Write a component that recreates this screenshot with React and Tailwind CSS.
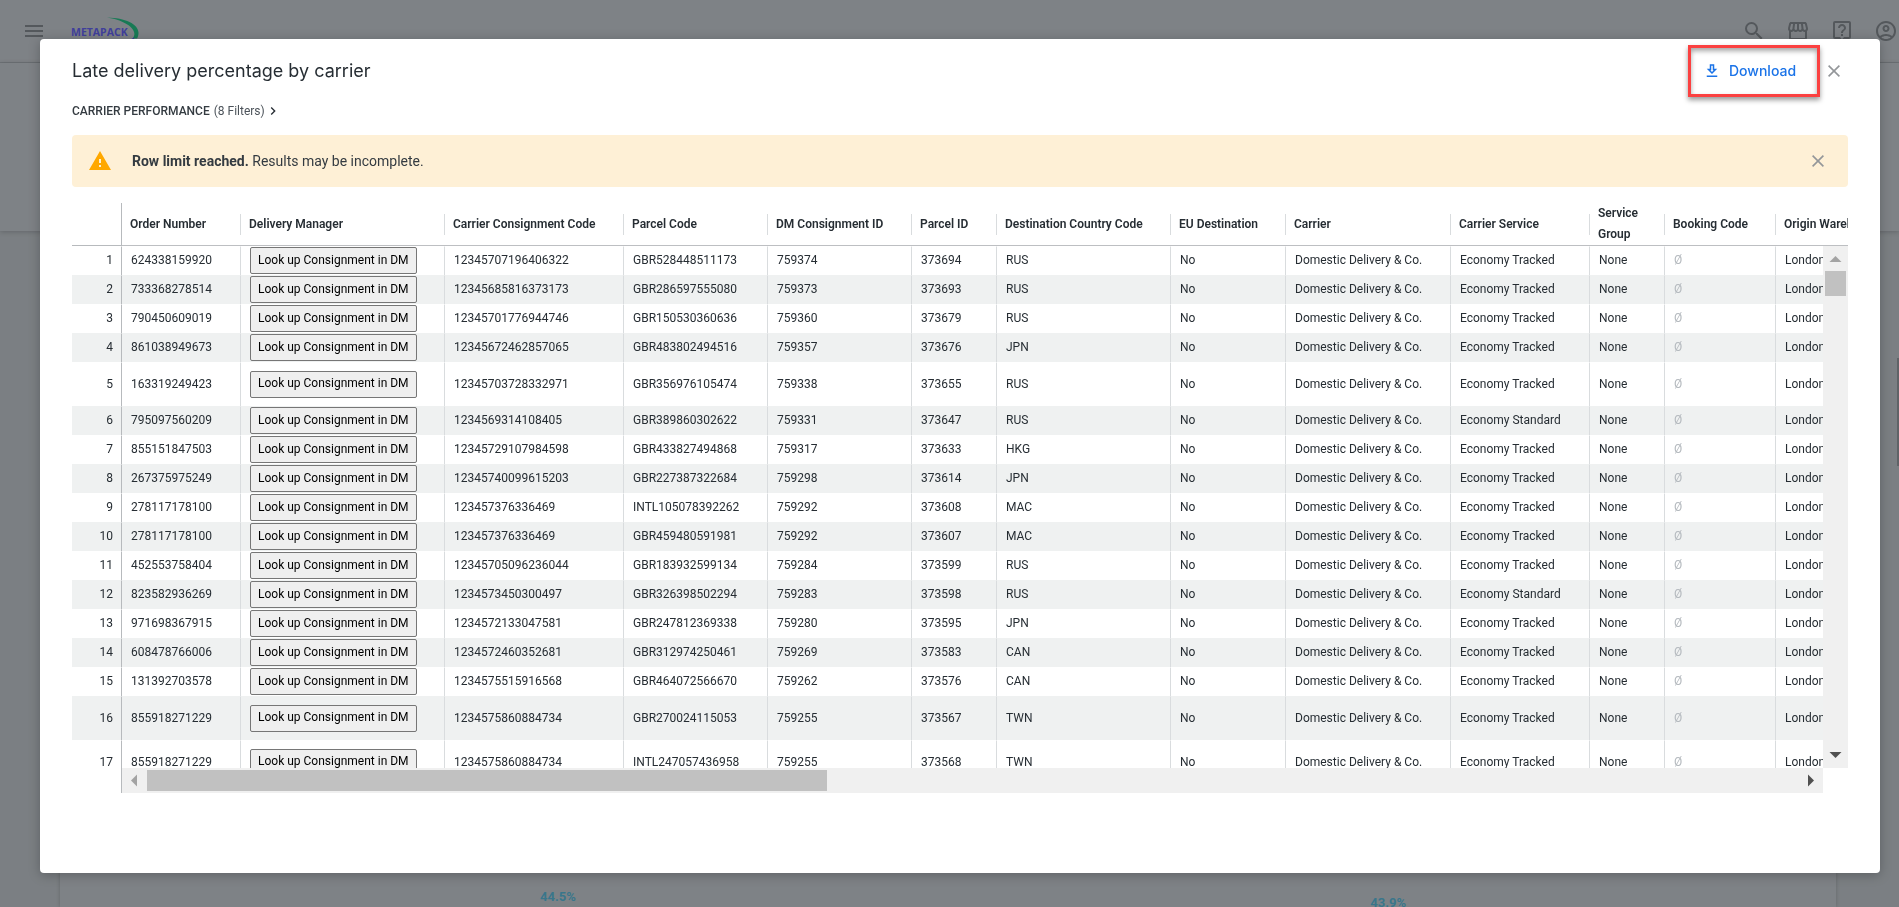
import { MdMenu, MdSearch, MdOutlineStorefront, MdOutlineLiveHelp, MdOutlineAccountCircle, MdWarning, MdChevronRight } from "react-icons/md";

const columns = [
  { label: "Order Number", width: "w-[119px]" },
  { label: "Delivery Manager", width: "w-[204px]" },
  { label: "Carrier Consignment Code", width: "w-[179px]" },
  { label: "Parcel Code", width: "w-36" },
  { label: "DM Consignment ID", width: "w-36" },
  { label: "Parcel ID", width: "w-[85px]" },
  { label: "Destination Country Code", width: "w-[174px]" },
  { label: "EU Destination", width: "w-[115px]" },
  { label: "Carrier", width: "w-[165px]" },
  { label: "Carrier Service", width: "w-[139px]" },
  { label: "Service Group", width: "w-[75px]" },
  { label: "Booking Code", width: "w-[111px]" },
  { label: "Origin Warehouse", width: "w-[140px]" },
];

const T = "Economy Tracked";
const S = "Economy Standard";

const rows = [
  ["624338159920", "12345707196406322", "GBR528448511173", "759374", "373694", "RUS", T],
  ["733368278514", "12345685816373173", "GBR286597555080", "759373", "373693", "RUS", T],
  ["790450609019", "12345701776944746", "GBR150530360636", "759360", "373679", "RUS", T],
  ["861038949673", "12345672462857065", "GBR483802494516", "759357", "373676", "JPN", T],
  ["163319249423", "12345703728332971", "GBR356976105474", "759338", "373655", "RUS", T, true],
  ["795097560209", "1234569314108405", "GBR389860302622", "759331", "373647", "RUS", S],
  ["855151847503", "12345729107984598", "GBR433827494868", "759317", "373633", "HKG", T],
  ["267375975249", "12345740099615203", "GBR227387322684", "759298", "373614", "JPN", T],
  ["278117178100", "123457376336469", "INTL105078392262", "759292", "373608", "MAC", T],
  ["278117178100", "123457376336469", "GBR459480591981", "759292", "373607", "MAC", T],
  ["452553758404", "12345705096236044", "GBR183932599134", "759284", "373599", "RUS", T],
  ["823582936269", "1234573450300497", "GBR326398502294", "759283", "373598", "RUS", S],
  ["971698367915", "1234572133047581", "GBR247812369338", "759280", "373595", "JPN", T],
  ["608478766006", "1234572460352681", "GBR312974250461", "759269", "373583", "CAN", T],
  ["131392703578", "1234575515916568", "GBR464072566670", "759262", "373576", "CAN", T],
  ["855918271229", "1234575860884734", "GBR270024115053", "759255", "373567", "TWN", T, true],
  ["855918271229", "1234575860884734", "INTL247057436958", "759255", "373568", "TWN", T, true],
];

function CloseIcon() {
  return (
    <svg viewBox="0 0 12 12" className="size-3" fill="none" stroke="currentColor" strokeWidth="1.6" aria-hidden="true">
      <path d="M.6.6l10.8 10.8M11.4.6L.6 11.4" />
    </svg>
  );
}

function Background() {
  return (
    <div className="flex min-h-screen flex-col bg-[#7b7f83] text-[#54585c]">
      <header className="flex h-[63px] shrink-0 items-center border-b border-[#6e7276] bg-[#7e8286] pr-px pl-[22px]">
        <button type="button" aria-label="Menu"><MdMenu className="size-6" /></button>
        <svg viewBox="0 0 76 32" className="mt-1 ml-[18px] h-8 w-[76px]" role="img" aria-label="Metapack">
          <path d="M43 .5c18 .4 31.500 6.500 31.500 15.300c0 2.200-.5 4-1.500 5.700l-4.200 0c1.200-1.800 1.800-3.300 1.500-5.400C69.500 9 57 2.600 43 .5z" fill="#187a55" />
          <path d="M63 24c3-1.200 5.500-2.400 7-3.400l.5 3.800-4 4zM1 22l5 3-3-.3z" fill="#363b9c" />
          <text x="7" y="19" fontFamily="Open Sans, sans-serif" fontSize="10.5" fontWeight="700" fill="#403f9b">METAPACK</text>
        </svg>
        <nav className="ml-auto flex gap-5">
          <button type="button" aria-label="Search"><MdSearch className="size-6" /></button>
          <button type="button" aria-label="Marketplace"><MdOutlineStorefront className="size-6" /></button>
          <button type="button" aria-label="Help"><MdOutlineLiveHelp className="size-6" /></button>
          <button type="button" aria-label="Account"><MdOutlineAccountCircle className="size-6" /></button>
        </nav>
      </header>
      <div className="h-[168px] shrink-0 bg-[#7e8286] shadow-[0_1px_5px_rgba(0,0,0,0.2)]" />
      <main className="mr-[63px] ml-[60px] flex flex-1 items-end justify-between bg-[#7e8286] pr-[430px] pl-[480px] text-[13px] leading-4 font-bold text-[#39768b] shadow-[0_0_4px_rgba(0,0,0,0.2)]">
        <span className="pb-0.5">44.5%</span>
        <span className="-mb-1">43.9%</span>
      </main>
    </div>
  );
}

function Th({ label }) {
  return (
    <th scope="col" className="h-[43px] border-b border-[#bdbfc2] p-0 text-left font-semibold">
      <div className="flex h-[21px] items-center border-r border-[#d9dcde] pr-1 pl-2 leading-[21px]">{label}</div>
    </th>
  );
}

function Row({ row, index }) {
  const [order, consignment, parcel, dm, id, country, service, tall] = row;
  const even = index % 2 === 1;
  const tone = even ? "border-t-[#eff1f1]" : "border-t-white";
  const cell = `border-t border-r border-r-[#d9dcde] pt-0 pr-0 pb-0.5 pl-[9px] ${tone}`;
  return (
    <tr className={`${tall ? "h-11" : "h-[29px]"} ${even ? "bg-[#eff1f1]" : "bg-white"}`}>
      <th scope="row" className={`border-t border-r border-r-[#b7babd] pt-0 pr-2 pb-0.5 text-right font-normal ${tone}`}>{index + 1}</th>
      <td className={cell}>{order}</td>
      <td className={`border-t border-r border-r-[#d9dcde] pt-0 pr-0 pb-px pl-[9px] ${tone}`}>
        <button type="button" className="block h-[27px] rounded-[2px] border border-[#767676] bg-[#efefef] px-[7px] pb-0.5 text-black">
          Look up Consignment in DM
        </button>
      </td>
      <td className={cell}>{consignment}</td>
      <td className={cell}>{parcel}</td>
      <td className={cell}>{dm}</td>
      <td className={cell}>{id}</td>
      <td className={cell}>{country}</td>
      <td className={cell}>No</td>
      <td className={cell}>Domestic Delivery &amp; Co.</td>
      <td className={cell}>{service}</td>
      <td className={cell}>None</td>
      <td className={`${cell} text-[#b4b9be]`}>Ø</td>
      <td className={cell}>London</td>
    </tr>
  );
}

function ResultsTable() {
  return (
    <div className="mt-4 flex min-h-0 flex-1 flex-col">
      <div className="relative min-h-0 flex-1 overflow-hidden">
        <table className="w-max table-fixed border-separate border-spacing-0 text-xs whitespace-nowrap">
          <colgroup>
            <col className="w-[50px]" />
            {columns.map((c) => <col key={c.label} className={c.width} />)}
          </colgroup>
          <thead>
            <tr className="whitespace-normal">
              <td className="h-[43px] border-r border-b border-[#b7babd] p-0" />
              {columns.map((c) => <Th key={c.label} label={c.label} />)}
            </tr>
          </thead>
          <tbody>
            {rows.map((row, i) => <Row key={i} row={row} index={i} />)}
          </tbody>
        </table>
        <div className="absolute top-[43px] right-0 bottom-0 flex w-[25px] flex-col items-center bg-[#f0f0f0]" aria-hidden="true">
          <svg viewBox="0 0 25 25" className="size-[25px] shrink-0" fill="#a3a3a3"><path d="M6.500 16h12L12.500 10z" /></svg>
          <div className="h-[25px] w-[21px] bg-[#c1c1c1]" />
          <svg viewBox="0 0 25 25" className="mt-auto size-[25px] shrink-0" fill="#505050"><path d="M6.500 9h12l-6 6z" /></svg>
        </div>
      </div>
      <div className="flex h-[25px] shrink-0 pr-[25px]" aria-hidden="true">
        <div className="w-[50px] shrink-0 border-r border-[#b7babd]" />
        <div className="flex flex-1 items-center bg-[#f0f0f0]">
          <svg viewBox="0 0 25 25" className="size-[25px] shrink-0" fill="#a3a3a3"><path d="M15 6.500v12L9 12.500z" /></svg>
          <div className="h-[21px] w-2/5 bg-[#c1c1c1]" />
          <svg viewBox="0 0 25 25" className="ml-auto size-[25px] shrink-0" fill="#505050"><path d="M10 6.500v12l6-6z" /></svg>
        </div>
      </div>
    </div>
  );
}

export default function App() {
  return (
    <div className="h-screen overflow-hidden font-['Roboto',sans-serif] text-[#262d33]">
      <Background />
      <div className="fixed inset-0 flex pt-[39px] pr-[19px] pb-[34px] pl-10">
        <section role="dialog" aria-labelledby="dialog-title" className="flex min-w-0 flex-1 flex-col rounded bg-white px-8 pb-20 shadow-[0_2px_12px_rgba(0,0,0,0.25)]">
          <div className="flex h-16 shrink-0 items-center">
            <h1 id="dialog-title" className="font-['Inter',sans-serif] text-lg leading-6">Late delivery percentage by carrier</h1>
            <div className="ml-auto flex h-[52px] w-[132px] border-[3px] border-[#fb4141] shadow-[0_3px_5px_rgba(0,0,0,0.4),inset_0_3px_5px_rgba(0,0,0,0.35)]">
              <button type="button" className="flex flex-1 items-center gap-2 pl-3 font-['Inter',sans-serif] text-sm font-medium text-[#1a73e8]">
                <svg viewBox="0 0 24 24" className="size-[18px]" fill="currentColor" aria-hidden="true">
                  <path fillRule="evenodd" d="M19 9h-4V3H9v6H5l7 7 7-7zm-8 2V5h2v6h1.170L12 13.170 9.830 11H11zM5 18h14v2H5z" />
                </svg>
                Download
              </button>
            </div>
            <button type="button" aria-label="Close" className="flex size-7 items-center justify-center text-[#939699]"><CloseIcon /></button>
          </div>
          <button type="button" className="flex h-4 shrink-0 items-center self-start text-xs leading-4">
            <span className="font-medium text-[#343b41]">CARRIER PERFORMANCE</span>
            <span className="ml-1 text-[#4c535a]">(8 Filters)</span>
            <MdChevronRight className="size-4" />
          </button>
          <div role="alert" className="mt-4 flex h-[52px] shrink-0 items-center rounded bg-[#fef0d6] px-4 text-sm text-[#343b41]">
            <MdWarning className="mr-5 size-6 text-[#ffa800]" />
            <p><strong className="font-bold">Row limit reached.</strong> Results may be incomplete.</p>
            <button type="button" aria-label="Dismiss" className="ml-auto flex size-7 items-center justify-center text-[#939699]"><CloseIcon /></button>
          </div>
          <ResultsTable />
        </section>
      </div>
      <div className="fixed top-[358px] right-0 h-[108px] w-0.5 bg-[#5f6367]" aria-hidden="true" />
    </div>
  );
}
